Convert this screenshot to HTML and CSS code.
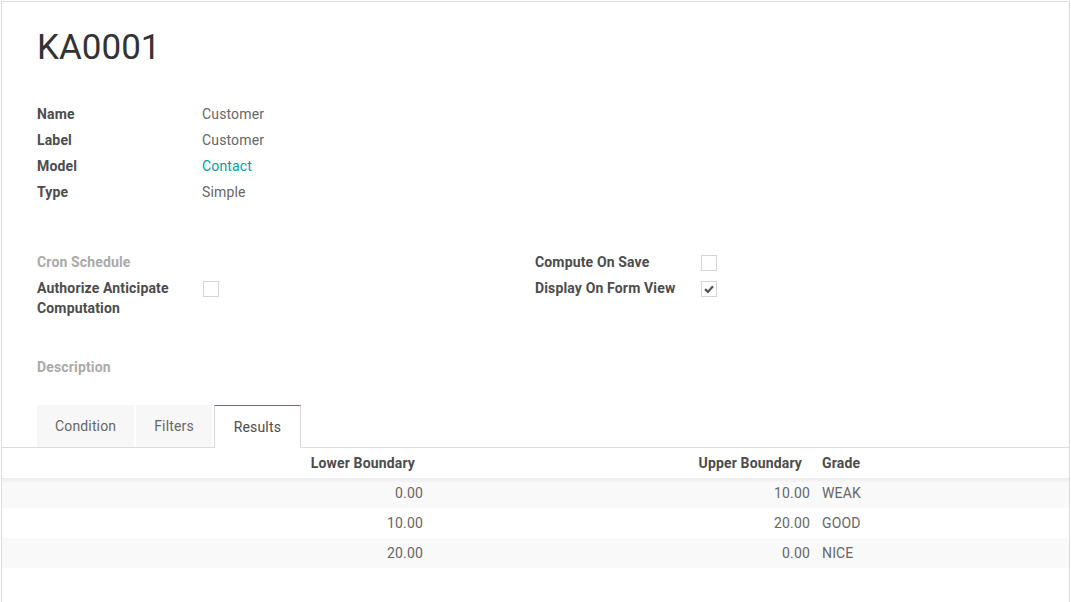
FILE: index.html
```html
<!DOCTYPE html>
<html lang="en">
<head>
<meta charset="utf-8">
<title>KA0001</title>
<link rel="stylesheet" href="styles.css">
</head>
<body>
<div class="sheet">
  <h1 class="title">KA0001</h1>

  <div class="fields">
    <div class="row"><div class="label">Name</div><div class="value">Customer</div></div>
    <div class="row"><div class="label">Label</div><div class="value">Customer</div></div>
    <div class="row"><div class="label">Model</div><div class="value link">Contact</div></div>
    <div class="row"><div class="label">Type</div><div class="value">Simple</div></div>
  </div>

  <div class="groups">
    <div class="group">
      <div class="row"><div class="label muted">Cron Schedule</div><div class="value"></div></div>
      <div class="row"><div class="label">Authorize Anticipate Computation</div><div class="value"><span class="checkbox"></span></div></div>
    </div>
    <div class="group">
      <div class="row"><div class="label">Compute On Save</div><div class="value"><span class="checkbox"></span></div></div>
      <div class="row"><div class="label">Display On Form View</div><div class="value"><span class="checkbox checked"><svg viewBox="0 0 16 16" width="16" height="16"><path d="M4 8.1 L6.9 10.9 L12 5.3" fill="none" stroke="#555" stroke-width="2.2"/></svg></span></div></div>
    </div>
  </div>

  <div class="description muted">Description</div>

  <div class="notebook">
    <div class="tabs">
      <div class="tab">Condition</div>
      <div class="tab">Filters</div>
      <div class="tab active">Results</div>
    </div>
    <table class="list">
      <colgroup>
        <col class="c-a"><col class="c-b"><col class="c-c"><col class="c-d">
      </colgroup>
      <thead>
        <tr><th></th><th class="num">Lower Boundary</th><th class="num">Upper Boundary</th><th>Grade</th></tr>
      </thead>
      <tbody>
        <tr class="odd first"><td></td><td class="num">0.00</td><td class="num">10.00</td><td>WEAK</td></tr>
        <tr><td></td><td class="num">10.00</td><td class="num">20.00</td><td>GOOD</td></tr>
        <tr class="odd"><td></td><td class="num">20.00</td><td class="num">0.00</td><td>NICE</td></tr>
      </tbody>
    </table>
  </div>
</div>
</body>
</html>
```
FILE: styles.css
```css
html, body {
  margin: 0;
  padding: 0;
  background: #fff;
}
body {
  font-family: Roboto, "Noto Sans", "Liberation Sans", sans-serif;
  font-size: 14px;
  letter-spacing: 0.15px;
  color: #666;
}
.sheet {
  box-sizing: border-box;
  width: 1069px;
  min-height: 601px;
  margin: 1px 0 0 1px;
  border: 1px solid #dcdcdc;
  border-bottom: none;
  padding: 24px 35px 0 35px;
}
.title {
  margin: 0;
  font-size: 35px;
  line-height: 44px;
  font-weight: 400;
  letter-spacing: 0;
  color: #333;
}
.fields {
  margin-top: 31px;
  width: 498px;
}
.row {
  display: grid;
  grid-template-columns: 165px 1fr;
  padding: 3px 0;
  line-height: 20px;
  min-height: 20px;
}
.label {
  font-weight: 700;
  color: #4c4c4c;
  padding-right: 12px;
}
.label.muted,
.muted {
  color: #aaa;
  font-weight: 700;
}
.value {
  color: #666;
}
.value.link {
  color: #00a09d;
}
.groups {
  margin-top: 44px;
  display: grid;
  grid-template-columns: 498px 498px;
}
.checkbox {
  display: block;
  box-sizing: border-box;
  width: 16px;
  height: 16px;
  margin: 3px 0 0 1px;
  border: 1px solid #d4d4d4;
  background: #fff;
  position: relative;
}
.checkbox svg {
  position: absolute;
  left: -1px;
  top: -1px;
}
.description {
  margin-top: 36px;
  line-height: 20px;
}
.notebook {
  margin: 28px -35px 0 -35px;
}
.tabs {
  display: flex;
  padding-left: 35px;
  border-bottom: 1px solid #dcdcdc;
  height: 42px;
}
.tab {
  box-sizing: border-box;
  height: 42px;
  line-height: 42px;
  padding: 0 18px;
  margin-right: 2px;
  background: #f7f7f7;
  color: #666;
}
.tab.active {
  background: #fff;
  color: #4c4c4c;
  height: 43px;
  line-height: 43px;
  padding: 0 19px;
  border: 1px solid #d6d6d6;
  border-top-color: #8a6381;
  border-bottom: none;
  margin-bottom: -1px;
}
.list {
  width: 100%;
  border-collapse: collapse;
  table-layout: fixed;
}
.c-a { width: 200px; }
.c-b { width: 225px; }
.c-c { width: 387px; }
.c-d { width: auto; }
.list th,
.list td {
  height: 30px;
  padding: 0 4px 0 8px;
  text-align: left;
  white-space: nowrap;
}
.list th {
  font-weight: 700;
  color: #4c4c4c;
}
.list th.num {
  text-align: right;
  padding-right: 12px;
}
.list td {
  color: #666;
}
.list td.num {
  text-align: right;
}
.list tr.odd td {
  background: #f9f9f9;
}
.list tr.first td {
  background: linear-gradient(rgba(0, 0, 0, 0.06), rgba(0, 0, 0, 0) 5px), #f9f9f9;
}
```
